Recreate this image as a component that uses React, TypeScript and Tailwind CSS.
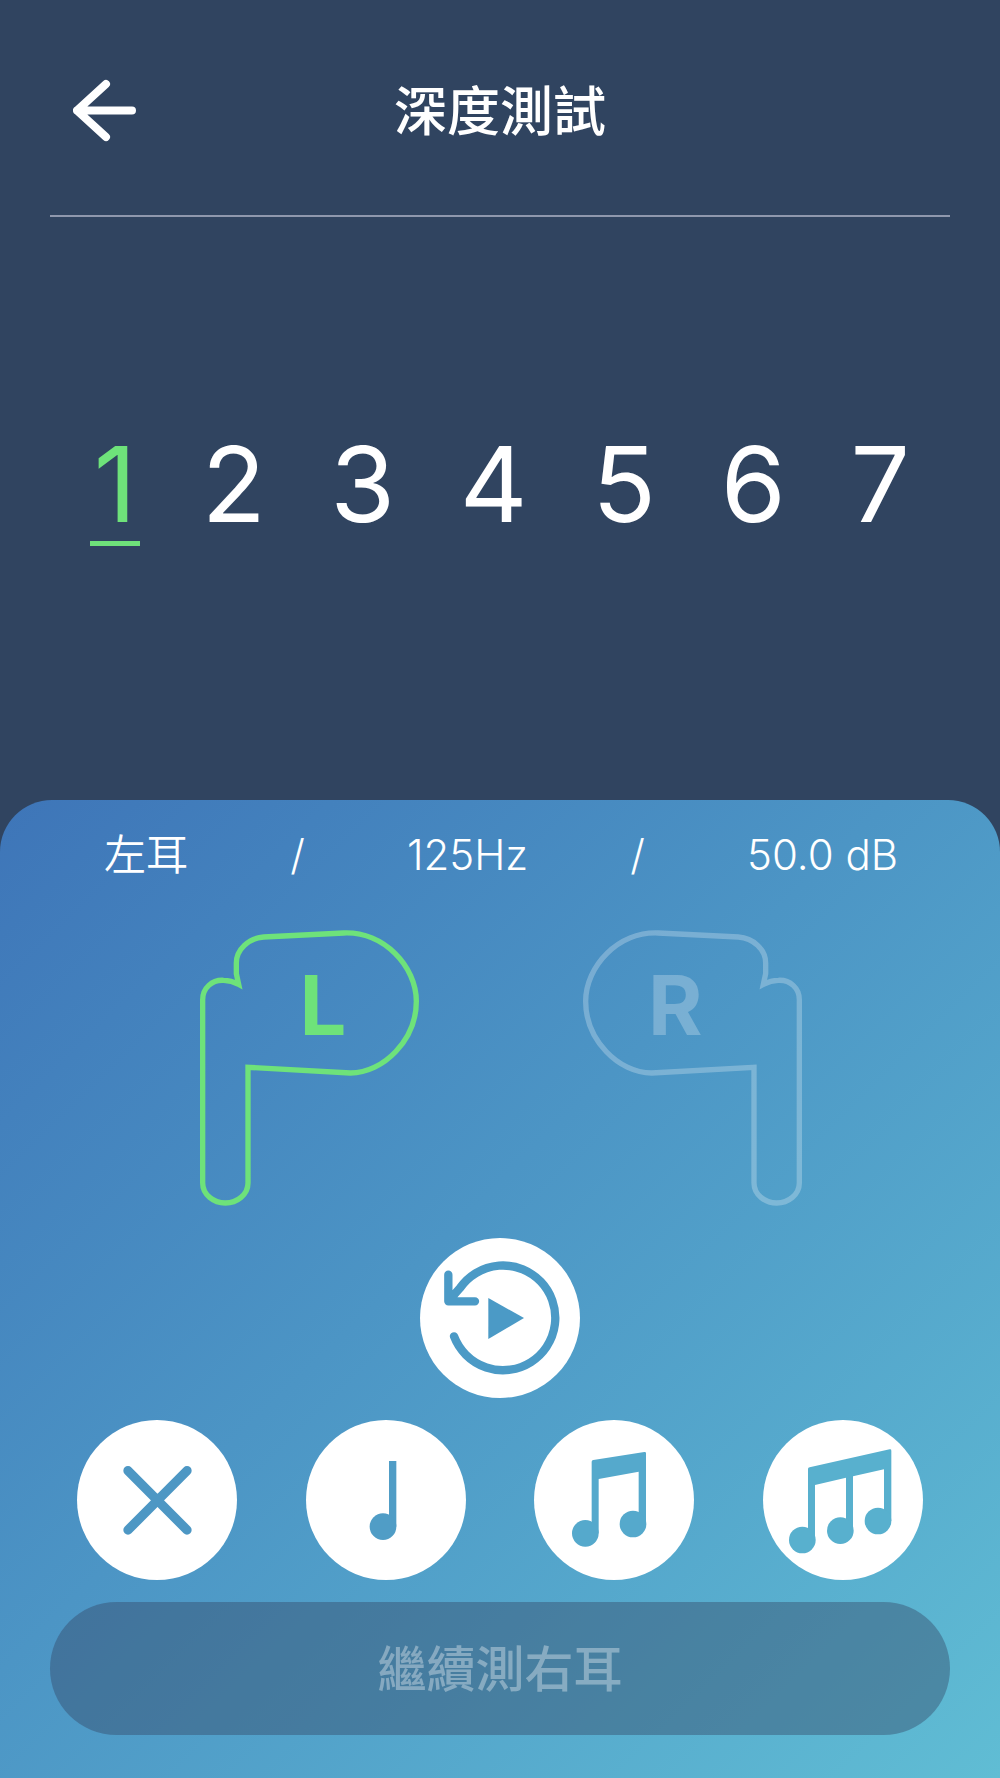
const sans = "font-['Inter','Noto_Sans_CJK_TC',sans-serif]";

function Bud({ active, letter }: { active: boolean; letter: string }) {
  const color = active ? "#6ee27a" : "rgba(255,255,255,0.26)";
  return (
    <div className="relative w-[232px] h-[284px]">
      <svg
        width="232"
        height="284"
        viewBox="80 85 696 852"
        className={active ? "" : "-scale-x-100"}
        fill="none"
      >
        <path
          d="M205 254 L198 222 L198 190 C198 150 235 115 280 112 L520 100 C640 95 738 200 738 305 C738 420 640 520 540 520 L233 503 L233 850 C233 885 200 910 165 910 C130 910 97 885 97 850 L97 300 C97 265 125 240 160 242 C175 242 190 246 205 254 Z"
          stroke={color}
          strokeWidth="16"
          strokeLinejoin="miter"
        />
      </svg>
      <span
        className={`absolute top-[27px] font-['Inter',sans-serif] font-bold text-[83px] leading-[100px] ${
          active ? "left-[103px] text-[#6ee27a]" : "right-[102px] text-white/25"
        }`}
      >
        {letter}
      </span>
    </div>
  );
}

function Circle({ children }: { children: React.ReactNode }) {
  return (
    <button className="w-40 h-40 rounded-full bg-white flex items-center justify-center shrink-0">
      <svg width="160" height="160" viewBox="0 0 480 480">
        {children}
      </svg>
    </button>
  );
}

const digits = ["2", "3", "4", "5", "6", "7"];

export default function App() {
  return (
    <div className={`w-[1000px] h-[1778px] bg-[#304460] flex flex-col ${sans}`}>
      <header className="h-[215px] px-[73px] pt-[77px] flex items-start">
        <svg width="66" height="68" viewBox="0 0 66 68" fill="none" className="shrink-0">
          <path
            d="M33 7 L4 33.5 L33 60 M4 33.5 H59"
            stroke="#fff"
            strokeWidth="8"
            strokeLinecap="round"
            strokeLinejoin="round"
          />
        </svg>
        <h1 className="flex-1 text-center text-white text-[53px] leading-[62px] font-medium pr-[66px] font-['Noto_Sans_CJK_TC',sans-serif]">
          深度測試
        </h1>
      </header>
      <div className="mx-[50px] h-[2px] bg-[#8f98ad]" />

      <div className="flex justify-between pl-[90px] pr-[90px] pt-[209px] text-white text-[105px] font-normal leading-[115px]">
        <div className="w-[50px] -mr-[3px] flex flex-col items-center text-[#6ee27a]">
          <span>1</span>
          <span className="w-[50px] h-[5px] bg-[#6ee27a]" />
        </div>
        {digits.map((d) => (
          <span key={d}>{d}</span>
        ))}
      </div>

      <section className="mt-auto h-[978px] rounded-t-[52px] bg-linear-to-br from-[#3e75b8] to-[#60bdd4] flex flex-col">
        <div className="flex justify-between pl-[104px] pr-[102px] pt-[30px] h-[128px] text-white text-[42px] font-[350] leading-[50px]">
          <span>左耳</span>
          <span>/</span>
          <span>125Hz</span>
          <span>/</span>
          <span>50.0 dB</span>
        </div>
        <div className="flex justify-center gap-[144px] pl-[1px]">
          <Bud active letter="L" />
          <Bud active={false} letter="R" />
        </div>
        <div className="flex justify-center mt-[26px]">
          <Circle>
            <g fill="none" stroke="#4b9ac6" strokeLinecap="round" strokeLinejoin="round">
              <path
                d="M102 295 A157 157 0 1 0 120 150 L85 190 M85 110 V190 H165"
                strokeWidth="25"
              />
            </g>
            <path d="M205 180 L312 240 L205 303 Z" fill="#4b9ac6" />
          </Circle>
        </div>
        <div className="flex justify-between px-[77px] mt-[22px]">
          <Circle>
            <path
              d="M153 152 L330 330 M330 152 L153 330"
              stroke="#4d97c4"
              strokeWidth="28"
              strokeLinecap="round"
            />
          </Circle>
          <Circle>
            <path d="M249 123 H271 V320 H249 Z" fill="#509dc6" />
            <circle cx="231" cy="320" r="40" fill="#509dc6" />
          </Circle>
          <Circle>
            <g fill="#55a9cc">
              <path d="M178 120 L331 96 Q336 95 336 100 V312 H314 V155 L194 177 V340 H173 V125 Q173 121 178 120 Z" />
              <circle cx="154" cy="340" r="40" />
              <circle cx="297" cy="312" r="40" />
            </g>
          </Circle>
          <Circle>
            <g fill="#58b0ce">
              <path d="M140 142 L380 88 Q385 87 385 92 V303 H363 V148 L270 169 V332 H249 V173 L156 195 V360 H135 V147 Q135 143 140 142 Z" />
              <circle cx="118" cy="360" r="40" />
              <circle cx="232" cy="332" r="40" />
              <circle cx="345" cy="303" r="40" />
            </g>
          </Circle>
        </div>
        <button className="mx-[50px] mt-[22px] h-[133px] pb-[6px] rounded-full bg-[#31415f]/40 text-white/35 text-[49px] font-medium font-['Noto_Sans_CJK_TC',sans-serif]">
          繼續測右耳
        </button>
      </section>
    </div>
  );
}
